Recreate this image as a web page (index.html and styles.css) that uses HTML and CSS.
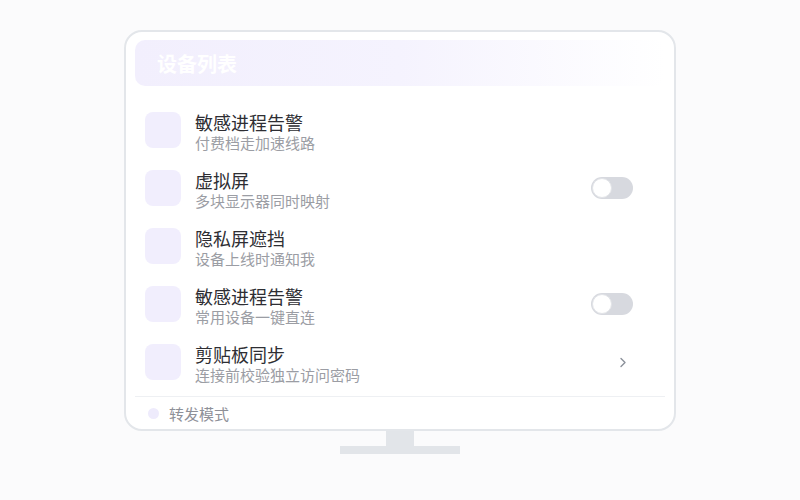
FILE: index.html
```html
<!DOCTYPE html>
<html lang="zh-CN">
  <head>
    <meta charset="UTF-8" />
    <meta name="viewport" content="width=device-width, initial-scale=1.0" />
    <title>设备列表</title>
    <link rel="stylesheet" href="styles.css">
  </head>
  <body>
    <div class="monitor">
      <div class="screen">
        <div class="screen-header">设备列表</div>
        <ul class="device-list">
          <li class="device-row">
            <div class="device-icon"></div>
            <div class="device-text">
              <div class="device-title">敏感进程告警</div>
              <div class="device-sub">付费档走加速线路</div>
            </div>
          </li>
          <li class="device-row">
            <div class="device-icon"></div>
            <div class="device-text">
              <div class="device-title">虚拟屏</div>
              <div class="device-sub">多块显示器同时映射</div>
            </div>
            <span class="toggle"><span class="knob"></span></span>
          </li>
          <li class="device-row">
            <div class="device-icon"></div>
            <div class="device-text">
              <div class="device-title">隐私屏遮挡</div>
              <div class="device-sub">设备上线时通知我</div>
            </div>
          </li>
          <li class="device-row">
            <div class="device-icon"></div>
            <div class="device-text">
              <div class="device-title">敏感进程告警</div>
              <div class="device-sub">常用设备一键直连</div>
            </div>
            <span class="toggle"><span class="knob"></span></span>
          </li>
          <li class="device-row">
            <div class="device-icon"></div>
            <div class="device-text">
              <div class="device-title">剪贴板同步</div>
              <div class="device-sub">连接前校验独立访问密码</div>
            </div>
            <svg class="chevron" width="8" height="11" viewBox="0 0 8 11">
              <polyline points="2,1.5 6,5.5 2,9.5" fill="none" stroke="#8b909a" stroke-width="1.4" stroke-linecap="round" stroke-linejoin="round" />
            </svg>
          </li>
        </ul>
        <div class="screen-footer">
          <span class="footer-dot"></span>
          <span class="footer-label">转发模式</span>
        </div>
      </div>
      <div class="stand-neck"></div>
      <div class="stand-base"></div>
    </div>
  </body>
</html>
```

FILE: styles.css
```css
body {
  margin: 0;
  background-color: #fbfbfc;
  font-family: "Noto Sans CJK SC", "Noto Sans", sans-serif;
}

.monitor {
  display: flex;
  flex-direction: column;
  align-items: center;
  padding-top: 30px;
}

.screen {
  box-sizing: border-box;
  width: 552px;
  height: 401px;
  padding: 8px 9px 0;
  background-color: #fff;
  border: 2px solid #e3e6ea;
  border-radius: 18px;
  display: flex;
  flex-direction: column;
}

.screen-header {
  height: 46px;
  padding-left: 22px;
  display: flex;
  align-items: center;
  border-radius: 10px;
  background: linear-gradient(90deg, #f2effd 0%, #f5f3fe 50%, rgba(255, 255, 255, 0) 100%);
  color: #fff;
  font-size: 20px;
  font-weight: 700;
}

.device-list {
  list-style: none;
  margin: 15px 0 0;
  padding: 0;
}

.device-row {
  height: 58px;
  display: flex;
  align-items: center;
  padding: 0 32px 0 10px;
}

.device-icon {
  width: 36px;
  height: 36px;
  flex-shrink: 0;
  border-radius: 8px;
  background-color: #f1eefd;
}

.device-text {
  flex: 1;
  margin: 3px 0 0 14px;
}

.device-title {
  font-size: 18px;
  line-height: 22px;
  color: #2e2e33;
}

.device-sub {
  font-size: 15px;
  line-height: 20px;
  color: #9b9da4;
}

.toggle {
  position: relative;
  width: 42px;
  height: 22px;
  border-radius: 11px;
  background-color: #d7d9df;
}

.knob {
  position: absolute;
  left: 1px;
  top: 1px;
  box-sizing: border-box;
  width: 20px;
  height: 20px;
  border-radius: 50%;
  background-color: #fff;
  border: 1px solid #e2e4e8;
}

.chevron {
  margin-right: 6px;
}

.screen-footer {
  margin-top: 5px;
  border-top: 1px solid #eef0f3;
  height: 32px;
  display: flex;
  align-items: center;
  padding-left: 13px;
}

.footer-dot {
  width: 11px;
  height: 11px;
  border-radius: 50%;
  background-color: #eeebfc;
}

.footer-label {
  margin-left: 10px;
  font-size: 15px;
  color: #8e9098;
}

.stand-neck {
  width: 28px;
  height: 15px;
  background-color: #e2e5e9;
}

.stand-base {
  width: 120px;
  height: 8px;
  background-color: #e2e5e9;
}
```
